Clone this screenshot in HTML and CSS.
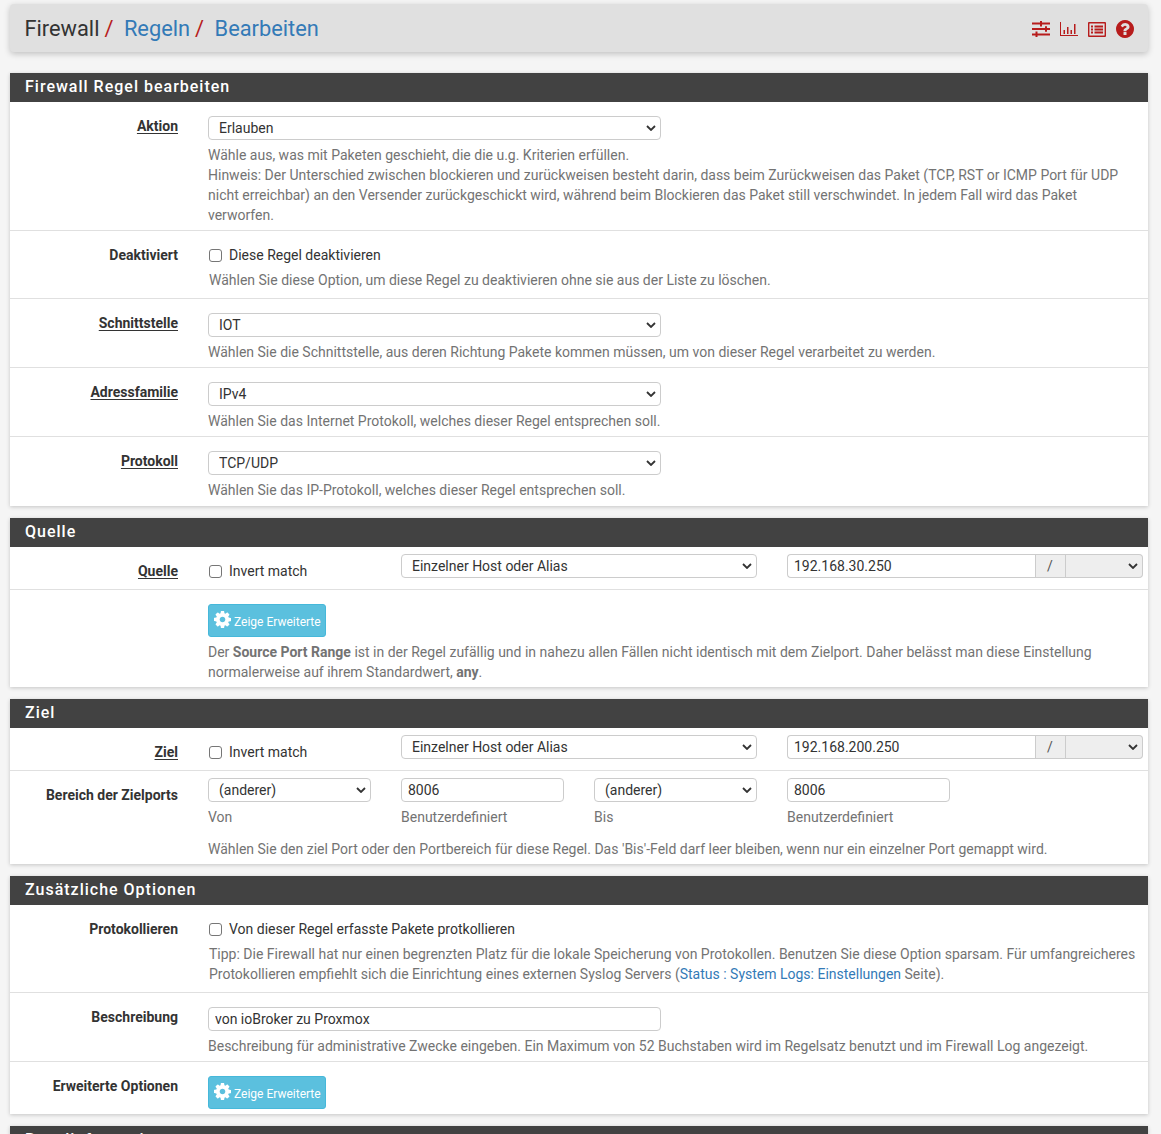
FILE: index.html
```html
<!DOCTYPE html>
<html lang="de">
<head>
<meta charset="utf-8">
<title>Firewall / Regeln / Bearbeiten</title>
<link rel="stylesheet" href="styles.css">
</head>
<body>
<header class="topbar">
  <h1 class="crumbs"><span>Firewall</span><i class="sep">/</i><a href="#">Regeln</a><i class="sep">/</i><a href="#">Bearbeiten</a></h1>
  <nav class="tools">
    <svg class="ico-sliders" viewBox="0 0 18 16"><path d="M0 1.500h18v2H0zM0 7h18v2H0zM0 12.500h18v2H0z"/><path d="M8 0h2v5.500H8zM13 5.300h2v5.400h-2zM3.500 10.500h2V16h-2z"/></svg>
    <svg class="ico-chart" viewBox="0 0 18 14"><path d="M0 0h1v13h17v1H0z"/><path d="M3.500 8h1.500v4H3.500zM7 5h1.500v7H7zM10.500 8h1.500v4h-1.500zM14 2h1.500v10H14z"/></svg>
    <svg class="ico-list" viewBox="0 0 18 15"><path fill-rule="evenodd" d="M1 0h16a1 1 0 0 1 1 1v13a1 1 0 0 1-1 1H1a1 1 0 0 1-1-1V1a1 1 0 0 1 1-1zm.4 1.400v12.200h15.200V1.400z"/><path d="M3 3.500h2v2H3zM3 6.500h2v2H3zM3 9.500h2v2H3zM6.500 3.500H15v2H6.500zM6.500 6.500H15v2H6.500zM6.500 9.500H15v2H6.500z"/></svg>
    <svg class="ico-help" viewBox="128 128 1536 1536"><path d="M1024 1376v-192q0-14-9-23t-23-9h-192q-14 0-23 9t-9 23v192q0 14 9 23t23 9h192q14 0 23-9t9-23zm256-672q0-88-55.500-163t-138.500-116-170-41q-243 0-371 213-15 24 8 42l132 100q7 6 19 6 16 0 25-12 53-68 86-92 34-24 86-24 48 0 85.500 26t37.500 59q0 38-20 61t-68 45q-63 28-115.500 86.500t-52.500 125.500v36q0 14 9 23t23 9h192q14 0 23-9t9-23q0-19 21.500-49.500t54.500-49.500q32-18 49-28.500t46-35 44.500-48 28-60.500 12.500-81zm384 192q0 209-103 385.500t-279.500 279.500-385.500 103-385.500-103-279.500-279.500-103-385.500 103-385.500 279.500-279.500 385.500-103 385.500 103 279.500 279.500 103 385.500z"/></svg>
  </nav>
</header>

<section class="panel">
  <h2 class="panel-head">Firewall Regel bearbeiten</h2>
  <div class="row row-a">
    <div class="lbl"><u>Aktion</u></div>
    <div class="body">
      <select class="ctl wide"><option>Erlauben</option></select>
      <p class="help">Wähle aus, was mit Paketen geschieht, die die u.g. Kriterien erfüllen.<br>Hinweis: Der Unterschied zwischen blockieren und zurückweisen besteht darin, dass beim Zurückweisen das Paket (TCP, RST or ICMP Port für UDP nicht erreichbar) an den Versender zurückgeschickt wird, während beim Blockieren das Paket still verschwindet. In jedem Fall wird das Paket verworfen.</p>
    </div>
  </div>
  <div class="row row-c">
    <div class="lbl">Deaktiviert</div>
    <div class="body">
      <label class="check"><input type="checkbox">Diese Regel deaktivieren</label>
      <p class="help help-c">Wählen Sie diese Option, um diese Regel zu deaktivieren ohne sie aus der Liste zu löschen.</p>
    </div>
  </div>
  <div class="row row-a">
    <div class="lbl"><u>Schnittstelle</u></div>
    <div class="body">
      <select class="ctl wide"><option>IOT</option></select>
      <p class="help">Wählen Sie die Schnittstelle, aus deren Richtung Pakete kommen müssen, um von dieser Regel verarbeitet zu werden.</p>
    </div>
  </div>
  <div class="row row-a">
    <div class="lbl"><u>Adressfamilie</u></div>
    <div class="body">
      <select class="ctl wide"><option>IPv4</option></select>
      <p class="help">Wählen Sie das Internet Protokoll, welches dieser Regel entsprechen soll.</p>
    </div>
  </div>
  <div class="row row-a">
    <div class="lbl"><u>Protokoll</u></div>
    <div class="body">
      <select class="ctl wide"><option>TCP/UDP</option></select>
      <p class="help">Wählen Sie das IP-Protokoll, welches dieser Regel entsprechen soll.</p>
    </div>
  </div>
</section>

<section class="panel">
  <h2 class="panel-head">Quelle</h2>
  <div class="row row-addr">
    <div class="lbl lbl-addr"><u>Quelle</u></div>
    <div class="body addr">
      <label class="check check-addr"><input type="checkbox">Invert match</label>
      <select class="ctl"><option>Einzelner Host oder Alias</option></select>
      <div class="group">
        <input class="ctl group-input" type="text" value="192.168.30.250">
        <span class="addon">/</span>
        <select class="ctl group-select"><option></option></select>
      </div>
    </div>
  </div>
  <div class="row row-btn">
    <div class="lbl"></div>
    <div class="body">
      <button class="btn" type="button"><svg viewBox="128 128 1536 1536"><path d="M1152 896q0-106-75-181t-181-75-181 75-75 181 75 181 181 75 181-75 75-181zm512-109v222q0 12-8 23t-20 13l-185 28q-19 54-39 91 35 50 107 138 10 12 10 25t-9 23q-27 37-99 108t-94 71q-12 0-26-9l-138-108q-44 23-91 38-16 136-29 186-7 28-36 28h-222q-14 0-24.500-8.500t-11.500-21.500l-28-184q-49-16-90-37l-141 107q-10 9-25 9-14 0-25-11-126-114-165-168-7-10-7-23 0-12 8-23 15-21 51-66.500t54-70.500q-27-50-41-99l-183-27q-13-2-21-12.500t-8-23.500v-222q0-12 8-23t19-13l186-28q14-46 39-92-40-57-107-138-10-12-10-24 0-10 9-23 26-36 98.500-107.500t94.500-71.500q13 0 26 10l138 107q44-23 91-38 16-136 29-186 7-28 36-28h222q14 0 24.500 8.500t11.500 21.500l28 184q49 16 90 37l142-107q9-9 24-9 13 0 25 10 129 119 165 170 7 8 7 22 0 12-8 23-15 21-51 66.500t-54 70.500q26 50 41 98l183 28q13 2 21 12.500t8 23.500z"/></svg>Zeige Erweiterte</button>
      <p class="help">Der <b>Source Port Range</b> ist in der Regel zufällig und in nahezu allen Fällen nicht identisch mit dem Zielport. Daher belässt man diese Einstellung normalerweise auf ihrem Standardwert, <b>any</b>.</p>
    </div>
  </div>
</section>

<section class="panel">
  <h2 class="panel-head">Ziel</h2>
  <div class="row row-addr">
    <div class="lbl lbl-addr"><u>Ziel</u></div>
    <div class="body addr">
      <label class="check check-addr"><input type="checkbox">Invert match</label>
      <select class="ctl"><option>Einzelner Host oder Alias</option></select>
      <div class="group">
        <input class="ctl group-input" type="text" value="192.168.200.250">
        <span class="addon">/</span>
        <select class="ctl group-select"><option></option></select>
      </div>
    </div>
  </div>
  <div class="row row-ports">
    <div class="lbl lbl-ports">Bereich der Zielports</div>
    <div class="body">
      <div class="ports">
        <div><select class="ctl small"><option>(anderer)</option></select><p class="help">Von</p></div>
        <div><input class="ctl small" type="text" value="8006"><p class="help">Benutzerdefiniert</p></div>
        <div><select class="ctl small"><option>(anderer)</option></select><p class="help">Bis</p></div>
        <div><input class="ctl small" type="text" value="8006"><p class="help">Benutzerdefiniert</p></div>
      </div>
      <p class="help help-ports">Wählen Sie den ziel Port oder den Portbereich für diese Regel. Das 'Bis'-Feld darf leer bleiben, wenn nur ein einzelner Port gemappt wird.</p>
    </div>
  </div>
</section>

<section class="panel">
  <h2 class="panel-head">Zusätzliche Optionen</h2>
  <div class="row row-c">
    <div class="lbl">Protokollieren</div>
    <div class="body">
      <label class="check"><input type="checkbox">Von dieser Regel erfasste Pakete protkollieren</label>
      <p class="help help-c">Tipp: Die Firewall hat nur einen begrenzten Platz für die lokale Speicherung von Protokollen. Benutzen Sie diese Option sparsam. Für umfangreicheres Protokollieren empfiehlt sich die Einrichtung eines externen Syslog Servers (<a href="#">Status : System Logs: Einstellungen</a> Seite).</p>
    </div>
  </div>
  <div class="row row-a">
    <div class="lbl">Beschreibung</div>
    <div class="body">
      <input class="ctl wide" type="text" value="von ioBroker zu Proxmox">
      <p class="help">Beschreibung für administrative Zwecke eingeben. Ein Maximum von 52 Buchstaben wird im Regelsatz benutzt und im Firewall Log angezeigt.</p>
    </div>
  </div>
  <div class="row row-btn">
    <div class="lbl">Erweiterte Optionen</div>
    <div class="body">
      <button class="btn" type="button"><svg viewBox="128 128 1536 1536"><path d="M1152 896q0-106-75-181t-181-75-181 75-75 181 75 181 181 75 181-75 75-181zm512-109v222q0 12-8 23t-20 13l-185 28q-19 54-39 91 35 50 107 138 10 12 10 25t-9 23q-27 37-99 108t-94 71q-12 0-26-9l-138-108q-44 23-91 38-16 136-29 186-7 28-36 28h-222q-14 0-24.500-8.500t-11.500-21.500l-28-184q-49-16-90-37l-141 107q-10 9-25 9-14 0-25-11-126-114-165-168-7-10-7-23 0-12 8-23 15-21 51-66.500t54-70.500q-27-50-41-99l-183-27q-13-2-21-12.500t-8-23.500v-222q0-12 8-23t19-13l186-28q14-46 39-92-40-57-107-138-10-12-10-24 0-10 9-23 26-36 98.500-107.500t94.500-71.500q13 0 26 10l138 107q44-23 91-38 16-136 29-186 7-28 36-28h222q14 0 24.500 8.500t11.500 21.500l28 184q49 16 90 37l142-107q9-9 24-9 13 0 25 10 129 119 165 170 7 8 7 22 0 12-8 23-15 21-51 66.500t-54 70.500q26 50 41 98l183 28q13 2 21 12.500t8 23.500z"/></svg>Zeige Erweiterte</button>
    </div>
  </div>
</section>

<section class="panel">
  <h2 class="panel-head">Regelinformationen</h2>
</section>
</body>
</html>
```

FILE: styles.css
```css
* { box-sizing: border-box; }
html { overflow: hidden; }
body {
  margin: 0;
  padding: 4px 13px 0 10px;
  height: 1134px;
  overflow: hidden;
  background: #f5f5f5;
  color: #333;
  font: 14px/20px Roboto, "Liberation Sans", sans-serif;
}
a { color: #337ab7; text-decoration: none; }

.topbar {
  display: flex;
  align-items: center;
  justify-content: space-between;
  height: 48px;
  margin-bottom: 21px;
  padding: 0 14px 0 14.500px;
  background: #e0e0e0;
  border-radius: 4px;
  box-shadow: 0 2px 6px rgba(0, 0, 0, .22);
}
.crumbs { margin: 2px 0 0; font-size: 21.800px; font-weight: 400; line-height: 28px; color: #333; }
.sep { margin: 0 10.500px 0 5px; font-style: normal; color: #b71c1c; }
.tools { display: flex; align-items: center; gap: 10px; padding-top: 2px; fill: #b71c1c; }
.ico-sliders { width: 18px; height: 16px; }
.ico-chart { width: 18px; height: 14px; }
.ico-list { width: 18px; height: 15px; }
.ico-help { width: 18px; height: 18px; }

.panel {
  margin-bottom: 12px;
  background: #fff;
  box-shadow: 0 1px 4px rgba(0, 0, 0, .2);
}
.panel-head {
  margin: 0;
  height: 29px;
  padding: 0 15px;
  background: #424242;
  color: #fff;
  font-size: 16px;
  font-weight: 500;
  line-height: 28px;
  letter-spacing: 1px;
}
.row {
  display: grid;
  grid-template-columns: 168px 1fr;
  column-gap: 30px;
  padding: 14px 5px 5px 0;
  border-bottom: 1px solid #e0e0e0;
}
.row:last-child { border-bottom: 0; }
.row-a:last-child { padding-bottom: 6px; }
.lbl { font-weight: 700; text-align: right; color: #333; }
.lbl u { text-underline-offset: 2px; }
.body { min-width: 0; }
.help { margin: 5px 0 0; color: #737373; }
.help b { font-weight: 700; }

.ctl {
  display: block;
  height: 24px;
  border: 1px solid #ccc;
  border-radius: 4px;
  background-color: #fff;
  color: #333;
  font: 14px/20px Roboto, "Liberation Sans", sans-serif;
  outline: none;
}
input.ctl { padding: 0 6px; }
select.ctl {
  appearance: none;
  -webkit-appearance: none;
  padding: 0 24px 0 10px;
  background-image: url("data:image/svg+xml,%3Csvg xmlns='http://www.w3.org/2000/svg' width='10' height='6'%3E%3Cpath d='M1 1l4 4 4-4' fill='none' stroke='%23333' stroke-width='1.800'/%3E%3C/svg%3E");
  background-repeat: no-repeat;
  background-position: right 4px center;
}
.wide { width: 453px; }
.small { width: 163px; }

.check { display: flex; align-items: center; gap: 7px; height: 20px; padding-left: 1px; color: #333; }
.check input {
  appearance: none;
  -webkit-appearance: none;
  flex: none;
  width: 13px;
  height: 13px;
  margin: 0;
  background: #fff;
  border: 1px solid #767676;
  border-radius: 3px;
}
.help-c { margin-top: 5px; padding-left: 1px; padding-bottom: 3px; }

.row-addr { padding: 7px 5px 8px 0; }
.lbl-addr { padding-top: 7px; }
.addr { display: grid; grid-template-columns: 163px 356px 356px; column-gap: 30px; }
.check-addr { margin-top: 7px; }
.addr select.ctl { width: 100%; }
.group { display: flex; height: 24px; }
.group-input { flex: 1; min-width: 0; border-radius: 4px 0 0 4px; border-right: 0; }
.addon {
  flex: none;
  width: 31px;
  padding-right: 1px;
  border: 1px solid #ccc;
  background: #eee;
  text-align: center;
  line-height: 22px;
  color: #555;
}
.addr select.group-select {
  flex: none;
  width: 77px;
  border-left: 0;
  border-radius: 0 4px 4px 0;
  background-color: #eee;
}

.row-btn { padding-bottom: 5px; }
.btn {
  display: flex;
  align-items: center;
  width: 118px;
  height: 33px;
  padding: 2px 0 0 5px;
  background: #5bc0de;
  border: 1px solid #46b8da;
  border-radius: 3px;
  color: #fff;
  font: 12px/16px Roboto, "Liberation Sans", sans-serif;
  fill: #fff;
}
.btn svg { width: 17px; height: 17px; margin: -5px 3px 0 0; }

.row-ports { padding-top: 7px; }
.lbl-ports { padding-top: 7px; }
.ports { display: grid; grid-template-columns: repeat(4, 163px); column-gap: 30px; }
.help-ports { margin-top: 12px; }
```
